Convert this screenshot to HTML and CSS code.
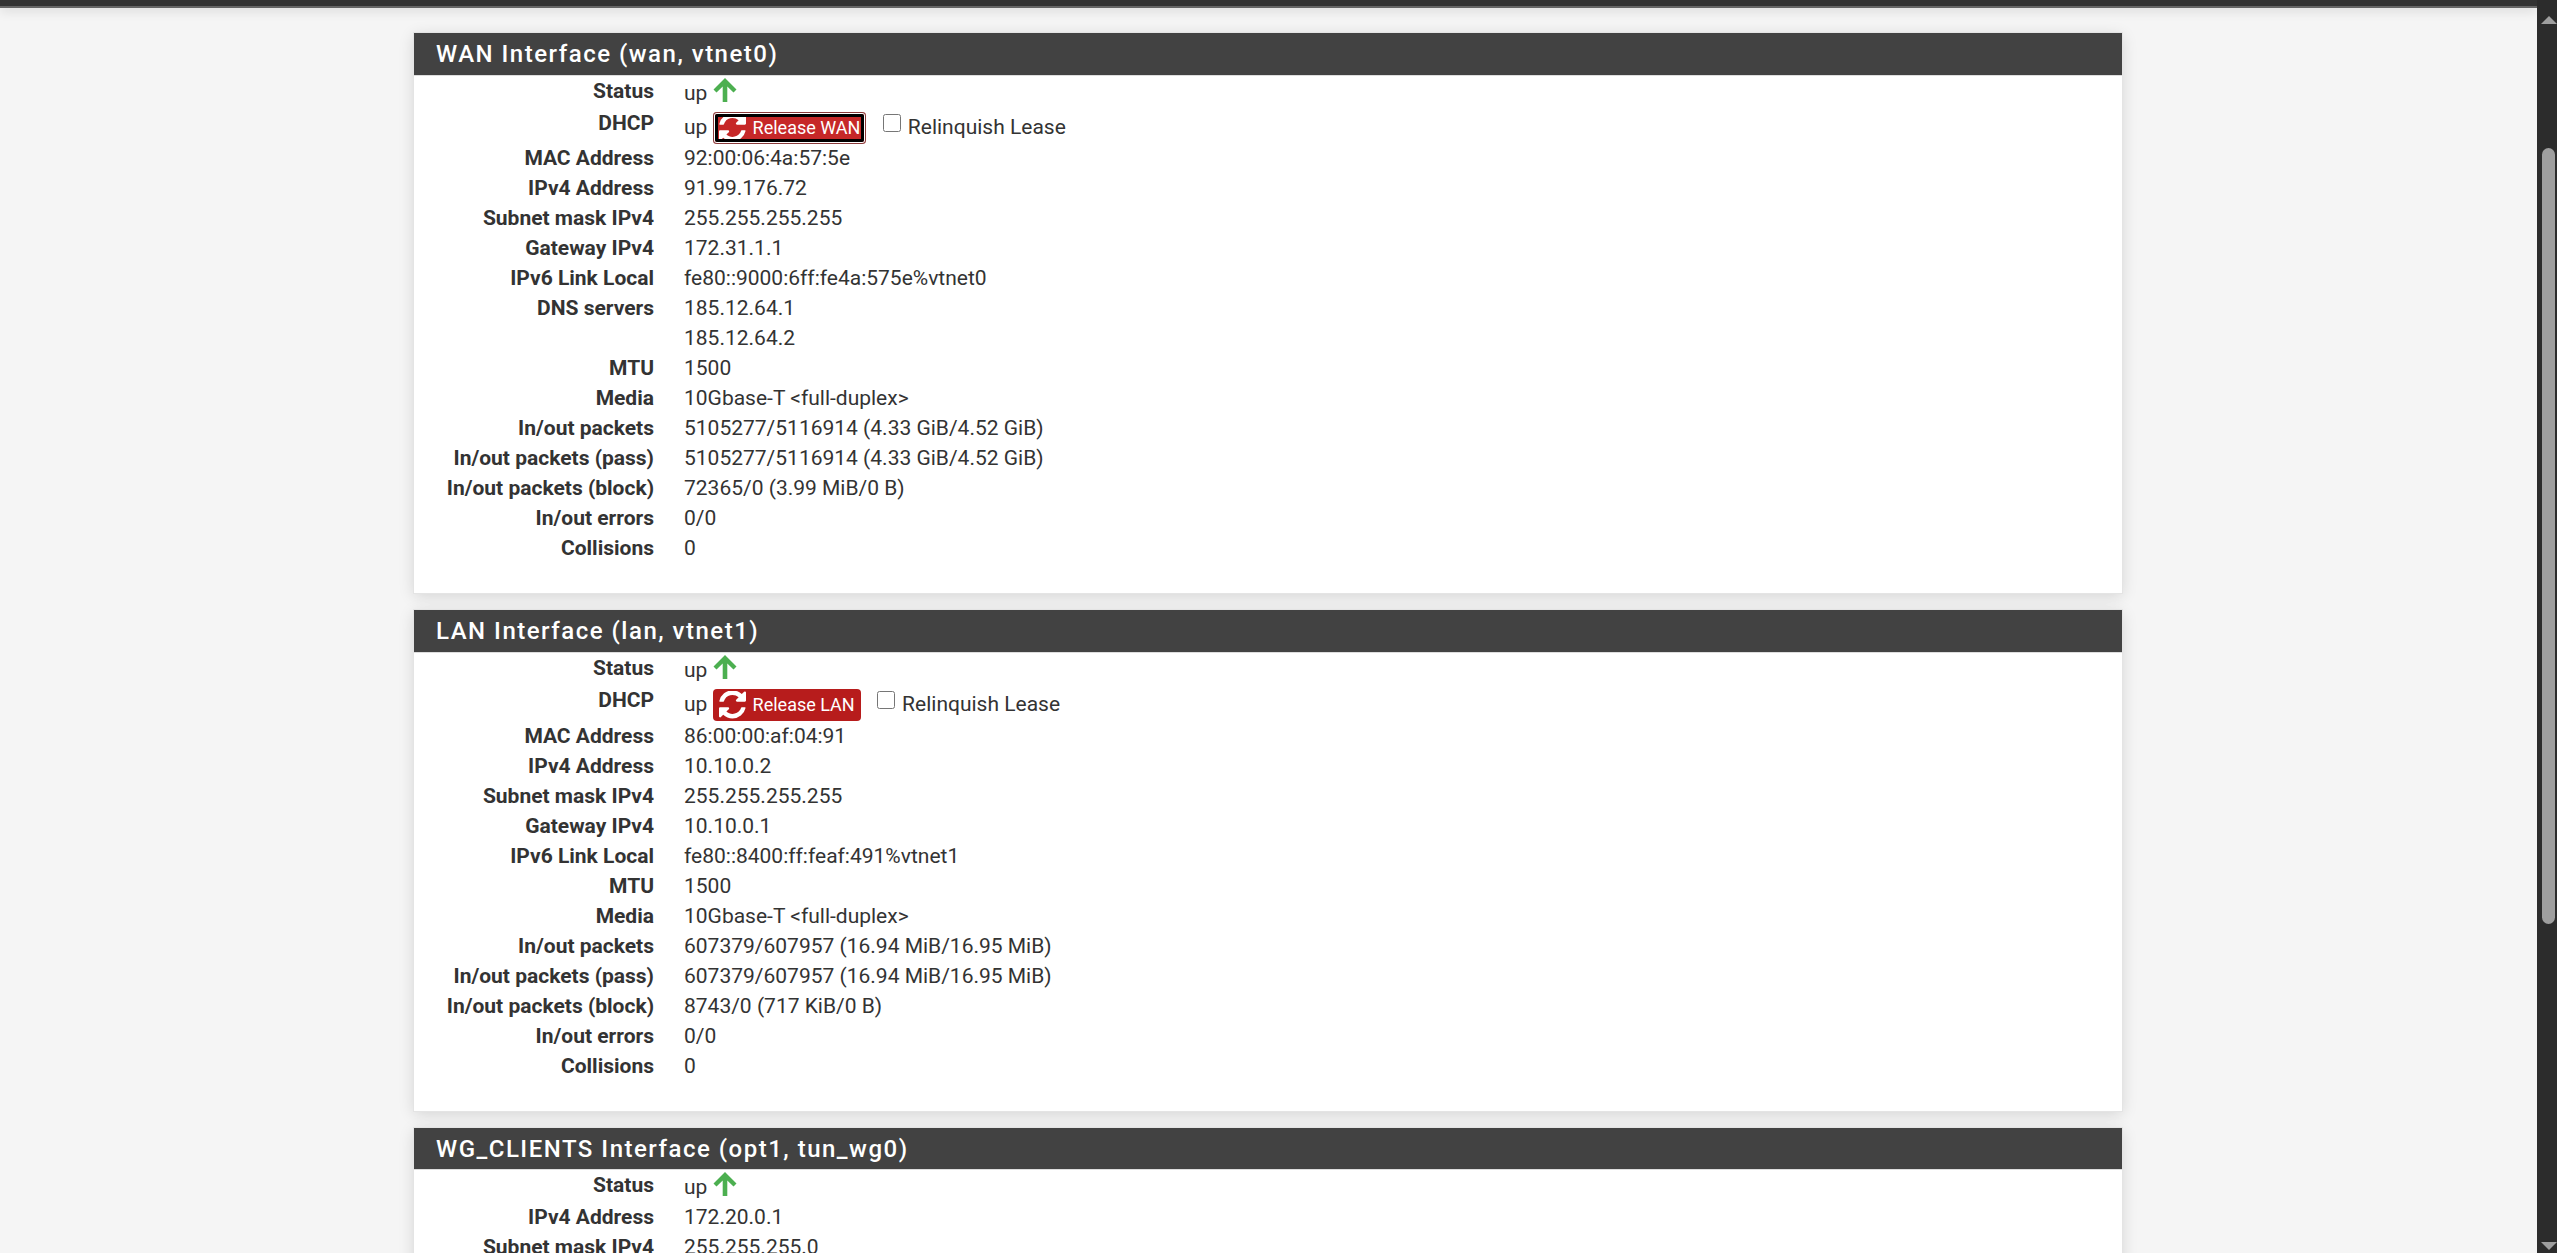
FILE: index.html
```html
<!DOCTYPE html>
<html lang="en">
<head>
<meta charset="utf-8">
<title>Status: Interfaces</title>
<link rel="stylesheet" href="styles.css">
</head>
<body>
<svg class="sprites" width="0" height="0" aria-hidden="true">
  <symbol id="up-arrow" viewBox="0 0 24 24">
    <path d="M12 0 L23.500 11.500 L20.500 14.500 L14.300 8.500 V24 H9.700 V8.500 L3.500 14.500 L0.500 11.500 Z"/>
  </symbol>
  <symbol id="refresh" viewBox="0 0 1536 1536">
    <path d="M1511 928q0 5-1 7-64 268-268 434.500t-478 166.500q-146 0-282.500-55t-243.500-157l-129 129q-19 19-45 19t-45-19-19-45v-448q0-26 19-45t45-19h448q26 0 45 19t19 45-19 45l-137 137q71 66 161 102t187 36q134 0 250-65t186-179q11-17 53-117 8-23 30-23h192q13 0 22.500 9.500t9.500 22.500zM1536 64v448q0 26-19 45t-45 19h-448q-26 0-45-19t-19-45 19-45l138-138q-148-137-349-137-134 0-250 65t-186 179q-11 17-53 117-8 23-30 23h-199q-13 0-22.500-9.500t-9.500-22.500v-7q65-268 270-434.500t480-166.500q146 0 284 55.500t245 156.500l130-129q19-19 45-19t45 19 19 45z"/>
  </symbol>
</svg>
<div class="window">
  <div class="viewport">
    <div class="topbar"></div>
    <main class="content">

      <section class="panel">
        <h2 class="panel-title">WAN Interface (wan, vtnet0)</h2>
        <dl class="details">
          <dt>Status</dt><dd class="status">up <svg class="arrow"><use href="#up-arrow"/></svg></dd>
          <dt>DHCP</dt>
          <dd class="dhcp">up <button class="btn btn-focus" type="button"><svg class="btn-icon"><use href="#refresh"/></svg>Release WAN</button>
            <label class="lease"><input type="checkbox"> Relinquish Lease</label></dd>
          <dt>MAC Address</dt><dd>92:00:06:4a:57:5e</dd>
          <dt>IPv4 Address</dt><dd>91.99.176.72</dd>
          <dt>Subnet mask IPv4</dt><dd>255.255.255.255</dd>
          <dt>Gateway IPv4</dt><dd>172.31.1.1</dd>
          <dt>IPv6 Link Local</dt><dd>fe80::9000:6ff:fe4a:575e%vtnet0</dd>
          <dt>DNS servers</dt><dd>185.12.64.1</dd>
          <dt></dt><dd>185.12.64.2</dd>
          <dt>MTU</dt><dd>1500</dd>
          <dt>Media</dt><dd>10Gbase-T &lt;full-duplex&gt;</dd>
          <dt>In/out packets</dt><dd>5105277/5116914 (4.33 GiB/4.52 GiB)</dd>
          <dt>In/out packets (pass)</dt><dd>5105277/5116914 (4.33 GiB/4.52 GiB)</dd>
          <dt>In/out packets (block)</dt><dd>72365/0 (3.99 MiB/0 B)</dd>
          <dt>In/out errors</dt><dd>0/0</dd>
          <dt>Collisions</dt><dd>0</dd>
        </dl>
      </section>

      <section class="panel">
        <h2 class="panel-title">LAN Interface (lan, vtnet1)</h2>
        <dl class="details">
          <dt>Status</dt><dd class="status">up <svg class="arrow"><use href="#up-arrow"/></svg></dd>
          <dt>DHCP</dt>
          <dd class="dhcp dhcp-tall">up <button class="btn" type="button"><svg class="btn-icon"><use href="#refresh"/></svg>Release LAN</button>
            <label class="lease"><input type="checkbox"> Relinquish Lease</label></dd>
          <dt>MAC Address</dt><dd>86:00:00:af:04:91</dd>
          <dt>IPv4 Address</dt><dd>10.10.0.2</dd>
          <dt>Subnet mask IPv4</dt><dd>255.255.255.255</dd>
          <dt>Gateway IPv4</dt><dd>10.10.0.1</dd>
          <dt>IPv6 Link Local</dt><dd>fe80::8400:ff:feaf:491%vtnet1</dd>
          <dt>MTU</dt><dd>1500</dd>
          <dt>Media</dt><dd>10Gbase-T &lt;full-duplex&gt;</dd>
          <dt>In/out packets</dt><dd>607379/607957 (16.94 MiB/16.95 MiB)</dd>
          <dt>In/out packets (pass)</dt><dd>607379/607957 (16.94 MiB/16.95 MiB)</dd>
          <dt>In/out packets (block)</dt><dd>8743/0 (717 KiB/0 B)</dd>
          <dt>In/out errors</dt><dd>0/0</dd>
          <dt>Collisions</dt><dd>0</dd>
        </dl>
      </section>

      <section class="panel">
        <h2 class="panel-title panel-title-short">WG_CLIENTS Interface (opt1, tun_wg0)</h2>
        <dl class="details">
          <dt>Status</dt><dd class="status">up <svg class="arrow"><use href="#up-arrow"/></svg></dd>
          <dt>IPv4 Address</dt><dd>172.20.0.1</dd>
          <dt>Subnet mask IPv4</dt><dd>255.255.255.0</dd>
        </dl>
      </section>

    </main>
  </div>
  <div class="scrollbar">
    <div class="scroll-up"></div>
    <div class="scroll-track"><div class="scroll-thumb"></div></div>
    <div class="scroll-down"></div>
  </div>
</div>
</body>
</html>
```
FILE: styles.css
```css
* { box-sizing: border-box; }
html, body { margin: 0; height: 100%; overflow: hidden; }
body {
  font-family: Roboto, "Liberation Sans", sans-serif;
  font-size: 21px;
  line-height: 30px;
  color: #333;
  background: #f5f5f5;
}
.sprites { position: absolute; }
.window { display: flex; height: 1253px; }
.viewport { flex: 1; min-width: 0; height: 1253px; overflow: hidden; }

.topbar {
  height: 8px;
  background: #333;
  border-bottom: 2px solid #666;
  box-shadow: 0 3px 12px rgba(0,0,0,.12);
}
.content { width: 1708px; margin-left: 414px; padding-top: 25px; }

.panel {
  background: #fff;
  margin-bottom: 17px;
  box-shadow: 0 0 0 1px #e4e4e4, 0 3px 15px rgba(0,0,0,.14);
}
.panel-title {
  margin: 0;
  height: 43px;
  padding: 0 22px;
  background: #424242;
  border-bottom: 1px solid #ddd;
  color: #fff;
  font-size: 24px;
  font-weight: 500;
  line-height: 42px;
  letter-spacing: 1.5px;
}
.panel-title-short { height: 42px; }

.details {
  display: grid;
  grid-template-columns: 240px 1fr;
  column-gap: 30px;
  margin: 0;
  padding: 0 0 30px;
}
.details dt { font-weight: 700; text-align: right; height: 30px; }
.details dd { margin: 0; height: 30px; }
.details .status { height: 32px; padding-top: 2px; }
.arrow { width: 24px; height: 24px; fill: #4caf50; vertical-align: -2px; }

.details .dhcp { height: 35px; padding-top: 2px; line-height: 34px; white-space: nowrap; }
.details .dhcp-tall { height: 36px; }
.btn {
  display: inline-block;
  height: 32px;
  padding: 0 6px;
  border: 0;
  border-radius: 4px;
  background: #b71c1c;
  color: #fff;
  font: 18px/30px Roboto, "Liberation Sans", sans-serif;
  vertical-align: 0;
}
.btn-focus {
  background: #c62828;
  box-shadow: inset 0 0 0 1px #8a3a3a, inset 0 0 0 2px #fff;
  outline: 3px solid #000;
  outline-offset: -5px;
}
.btn-icon { width: 27px; height: 28px; fill: #fff; margin-right: 7px; vertical-align: -8px; }
.lease { margin-left: 11px; }
.lease input {
  width: 18px;
  height: 18px;
  margin: 0 2px 0 0;
  vertical-align: 2px;
}

.scrollbar { width: 20px; height: 1253px; background: #2c2c2c; display: flex; flex-direction: column; align-items: center; }
.scroll-up, .scroll-down { width: 0; height: 0; margin-left: 3px; border-left: 8px solid transparent; border-right: 8px solid transparent; }
.scroll-up { margin-top: 16px; border-bottom: 8px solid #9f9f9f; }
.scroll-down { margin-bottom: 3px; border-top: 8px solid #9f9f9f; }
.scroll-track { flex: 1; width: 100%; padding: 124px 2px 0 5px; }
.scroll-thumb { height: 776px; background: #9f9f9f; border-radius: 7px; }
```
